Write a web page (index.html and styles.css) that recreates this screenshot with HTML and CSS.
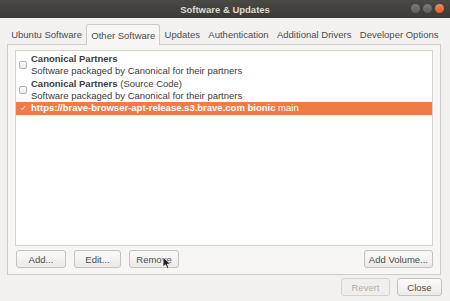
FILE: index.html
```html
<!DOCTYPE html>
<html lang="en">
  <head>
    <meta charset="UTF-8" />
    <link rel="stylesheet" href="styles.css">
  </head>
  <body>
    <div class="window">
      <div class="titlebar">
        <span class="title">Software &amp; Updates</span>
        <div class="controls">
          <span class="ctl"></span>
          <span class="ctl"></span>
          <span class="ctl close"></span>
        </div>
      </div>

      <div class="content">
        <div class="tabs">
          <span class="tab">Ubuntu Software</span>
          <span class="tab active">Other Software</span>
          <span class="tab">Updates</span>
          <span class="tab">Authentication</span>
          <span class="tab">Additional Drivers</span>
          <span class="tab">Developer Options</span>
        </div>

        <div class="panel">
          <div class="list">
            <div class="row">
              <span class="check"></span>
              <div class="text">
                <div><b>Canonical Partners</b></div>
                <div>Software packaged by Canonical for their partners</div>
              </div>
            </div>
            <div class="row">
              <span class="check"></span>
              <div class="text">
                <div><b>Canonical Partners</b> (Source Code)</div>
                <div>Software packaged by Canonical for their partners</div>
              </div>
            </div>
            <div class="row selected">
              <span class="check on">
                <svg width="8" height="8" viewBox="0 0 8 8"><path d="M1.2 4.2 L3.2 6.2 L6.8 1.5" fill="none" stroke="white" stroke-width="1.3"/></svg>
              </span>
              <div class="text">
                <div><b>https://brave-browser-apt-release.s3.brave.com bionic</b> main</div>
              </div>
            </div>
          </div>

          <div class="actions">
            <button class="btn wide">Add...</button>
            <button class="btn">Edit...</button>
            <button class="btn wide">Remove
              <svg class="cursor" width="10" height="14" viewBox="0 0 10 14"><path d="M1 1 L1 11 L3.5 8.8 L5.3 12.8 L7 12 L5.3 8.2 L8.6 8.2 Z" fill="#222" stroke="white" stroke-width="0.8"/></svg>
            </button>
            <span class="spacer"></span>
            <button class="btn volume">Add Volume...</button>
          </div>
        </div>

        <div class="footer">
          <button class="btn disabled">Revert</button>
          <button class="btn narrow">Close</button>
        </div>
      </div>
    </div>
  </body>
</html>
```

FILE: styles.css
```css
* {
  box-sizing: border-box;
}

body {
  margin: 0;
  width: 450px;
  height: 301px;
  overflow: hidden;
  font-family: "Liberation Sans", "DejaVu Sans", sans-serif;
  font-size: 9.5px;
  color: #3c3c3c;
  background-color: #f2f1f0;
}

.window {
  display: flex;
  flex-direction: column;
  height: 301px;
}

.titlebar {
  height: 18px;
  flex-shrink: 0;
  display: flex;
  align-items: center;
  justify-content: center;
  position: relative;
  background: linear-gradient(#4a4944, #3b3a36);
}

.title {
  color: #dfdbd2;
  font-weight: bold;
  font-size: 9.5px;
}

.controls {
  position: absolute;
  right: 6px;
  top: 4px;
  display: flex;
  gap: 3px;
}

.ctl {
  width: 9px;
  height: 9px;
  border-radius: 50%;
  background: linear-gradient(#7c7a75, #5f5d58);
}

.ctl.close {
  background: linear-gradient(#f6875c, #e25a22);
}

.content {
  flex: 1;
  display: flex;
  flex-direction: column;
  padding: 6px 9px 4px 7px;
}

.tabs {
  display: flex;
  height: 20px;
  align-items: stretch;
}

.tab {
  display: flex;
  align-items: center;
  white-space: nowrap;
  flex-shrink: 0;
  padding: 0 4.2px;
  color: #4c4c4c;
}

.tab.active {
  background-color: #f7f6f5;
  border: 1px solid #cfccc8;
  border-bottom: none;
  border-radius: 3px 3px 0 0;
  margin-bottom: -1px;
  height: 21px;
  position: relative;
}

.panel {
  height: 231px;
  border: 1px solid #cfccc8;
  background-color: #f7f6f5;
  padding: 5px 7px 6px 7px;
  display: flex;
  flex-direction: column;
}

.list {
  flex: 1;
  background-color: #ffffff;
  border: 1px solid #d6d3cf;
  padding-top: 1px;
}

.row {
  display: flex;
  align-items: center;
  padding: 0.5px 0 0.5px 3px;
  line-height: 12px;
}

.row .text {
  margin-left: 4px;
}

.row.selected {
  background-color: #ef7b46;
  color: #ffffff;
  padding: 0 0 0 3px;
  line-height: 12.5px;
}

.check {
  width: 8px;
  height: 8px;
  border: 1px solid #b5b2ad;
  border-radius: 2px;
  background: linear-gradient(#fdfdfd, #ebeae8);
  display: flex;
  align-items: center;
  justify-content: center;
}

.check.on {
  background: none;
  border-color: transparent;
}

.actions {
  display: flex;
  gap: 8px;
  margin-top: 4px;
  padding-left: 1px;
}

.spacer {
  flex: 1;
}

.btn {
  font-family: inherit;
  font-size: 9.5px;
  color: #4c4c4c;
  height: 18px;
  min-width: 47px;
  padding: 0 6px;
  border: 1px solid #c4c1bc;
  border-radius: 3px;
  background: linear-gradient(#fbfbfa, #eceae8);
  position: relative;
}

.btn.wide {
  min-width: 50px;
}

.btn.volume {
  padding: 0 4px;
}

.btn.narrow {
  min-width: 45px;
}

.btn.disabled {
  color: #b0aeab;
  background: #f0efee;
  border-color: #d6d3cf;
  min-width: 49px;
}

.cursor {
  position: absolute;
  left: 32px;
  top: 5px;
}

.footer {
  display: flex;
  justify-content: flex-end;
  gap: 7px;
  margin-top: 3px;
  margin-right: -1px;
}
```
